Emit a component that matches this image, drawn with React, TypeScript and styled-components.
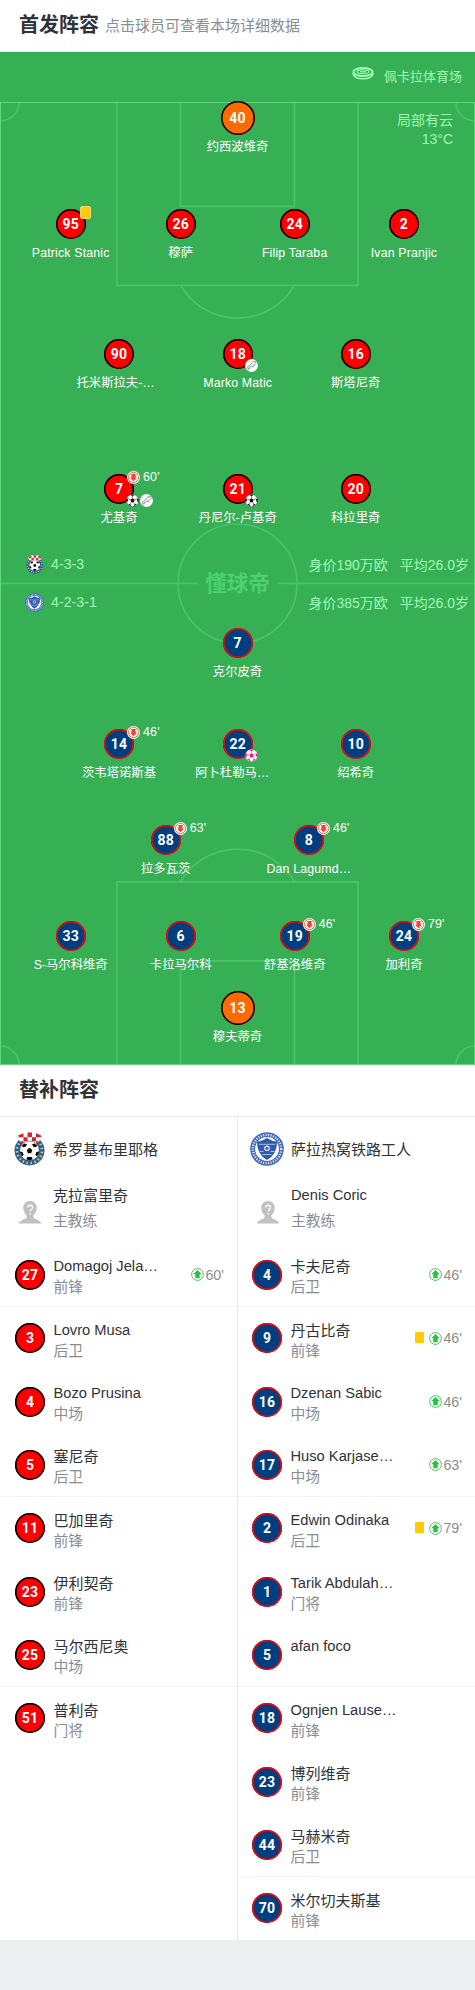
import React from 'react'
import styled, { createGlobalStyle } from 'styled-components'

type Team = 'home' | 'away' | 'keeper'

interface IPlayer {
  no: number,
  name: string,
  clipped?: boolean,
  card?: boolean,
  off?: string,
  events?: string[],
}

interface ISub {
  no: number,
  name: string,
  role?: string,
  card?: boolean,
  on?: string,
}

const COLORS = {
  home: { fill: '#fe0000', ring: '#000' },
  away: { fill: '#003f7f', ring: '#fe0000' },
  keeper: { fill: '#ff6a00', ring: '#000' },
}

// column widths for rows of one to four players
const COLUMNS: { [count: number]: string } = {
  1: '475px',
  2: '143.4px 143.2px',
  3: '118px 119.4px 116.6px',
  4: '109.4px 110.6px 117.4px 101.2px',
}
const INDENT: { [count: number]: number } = { 1: 0, 2: 94, 3: 60, 4: 16 }

const homeRows: IPlayer[][] = [
  [
    { no: 95, name: 'Patrick Stanic', card: true },
    { no: 26, name: '穆萨' },
    { no: 24, name: 'Filip Taraba' },
    { no: 2, name: 'Ivan Pranjic' },
  ],
  [
    { no: 90, name: '托米斯拉夫-…', clipped: true },
    { no: 18, name: 'Marko Matic', events: ['assist'] },
    { no: 16, name: '斯塔尼奇' },
  ],
  [
    { no: 7, name: '尤基奇', off: "60'", events: ['goal', 'assist'] },
    { no: 21, name: '丹尼尔-卢基奇', events: ['goal'] },
    { no: 20, name: '科拉里奇' },
  ],
]

const awayRows: IPlayer[][] = [
  [{ no: 7, name: '克尔皮奇' }],
  [
    { no: 14, name: '茨韦塔诺斯基', off: "46'" },
    { no: 22, name: '阿卜杜勒马…', clipped: true, events: ['penalty'] },
    { no: 10, name: '绍希奇' },
  ],
  [
    { no: 88, name: '拉多瓦茨', off: "63'" },
    { no: 8, name: 'Dan Lagumd…', clipped: true, off: "46'" },
  ],
  [
    { no: 33, name: 'S-马尔科维奇' },
    { no: 6, name: '卡拉马尔科' },
    { no: 19, name: '舒基洛维奇', off: "46'" },
    { no: 24, name: '加利奇', off: "79'" },
  ],
]

const homeSubs: ISub[] = [
  { no: 27, name: 'Domagoj Jela…', role: '前锋', on: "60'" },
  { no: 3, name: 'Lovro Musa', role: '后卫' },
  { no: 4, name: 'Bozo Prusina', role: '中场' },
  { no: 5, name: '塞尼奇', role: '后卫' },
  { no: 11, name: '巴加里奇', role: '前锋' },
  { no: 23, name: '伊利契奇', role: '前锋' },
  { no: 25, name: '马尔西尼奥', role: '中场' },
  { no: 51, name: '普利奇', role: '门将' },
]

const awaySubs: ISub[] = [
  { no: 4, name: '卡夫尼奇', role: '后卫', on: "46'" },
  { no: 9, name: '丹古比奇', role: '前锋', card: true, on: "46'" },
  { no: 16, name: 'Dzenan Sabic', role: '中场', on: "46'" },
  { no: 17, name: 'Huso Karjase…', role: '中场', on: "63'" },
  { no: 2, name: 'Edwin Odinaka', role: '后卫', card: true, on: "79'" },
  { no: 1, name: 'Tarik Abdulah…', role: '门将' },
  { no: 5, name: 'afan foco' },
  { no: 18, name: 'Ognjen Lause…', role: '前锋' },
  { no: 23, name: '博列维奇', role: '前锋' },
  { no: 44, name: '马赫米奇', role: '后卫' },
  { no: 70, name: '米尔切夫斯基', role: '前锋' },
]

const isLatin = (name: string) => /^[A-Za-z ]+…?$/.test(name)

const GlobalStyle = createGlobalStyle`
  body {
    margin: 0;
    background: #edeef0;
    font-family: "Liberation Sans", "Noto Sans CJK SC", sans-serif;
    color: #303337;
  }
`;

const Page = styled.div`
  width: 475px;
  height: 1990px;
  overflow: hidden;
`;

const SectionHeader = styled.div`
  display: flex;
  align-items: center;
  box-sizing: border-box;
  height: 52px;
  padding: 0 19px 2px;
  background: #fff;
  border-bottom: 1px solid #ebebed;
`;

const SectionTitle = styled.h2`
  margin: 0;
  font-size: 20px;
  line-height: 30px;
  font-weight: 700;
`;

const SectionHint = styled.span`
  margin: -1px 0 0 6px;
  font-size: 15px;
  color: #888d94;
`;

const Field = styled.div`
  position: relative;
  height: 1013px;
  background: #37af55;
  color: #fff;
`;

const FieldLines = styled.svg`
  position: absolute;
  left: 0;
  top: 50px;
`;

const FieldContent = styled.div`
  position: relative;
  display: flex;
  flex-direction: column;
`;

const Stadium = styled.div`
  box-sizing: border-box;
  display: flex;
  justify-content: flex-end;
  align-items: center;
  gap: 10px;
  height: 49px;
  padding: 0 13px 2px 0;
  font-size: 13px;
  color: #9cfab3;

  svg {
    margin-top: -4px;
  }
`;

const Weather = styled.div`
  position: absolute;
  right: 22px;
  top: 59px;
  font-size: 14px;
  line-height: 19px;
  text-align: right;
  color: #9cfab3;
`;

const PlayerRow = styled.div<{ $count: number, $gap: number }>`
  display: grid;
  grid-template-columns: ${({ $count }) => COLUMNS[$count]};
  margin-top: ${({ $gap }) => $gap}px;
  padding-left: ${({ $count }) => INDENT[$count]}px;
`;

const PlayerCell = styled.div`
  display: flex;
  flex-direction: column;
  align-items: center;
`;

const ShirtHolder = styled.div`
  position: relative;
`;

const Shirt = styled.div<{ $team: Team }>`
  display: flex;
  align-items: center;
  justify-content: center;
  flex: none;
  width: ${({ $team }) => $team === 'keeper' ? 34 : 30}px;
  height: ${({ $team }) => $team === 'keeper' ? 34 : 30}px;
  border-radius: 50%;
  background: ${({ $team }) => COLORS[$team].fill};
  box-shadow: inset 0 0 0 1.6px ${({ $team }) => COLORS[$team].ring};
  color: #fff;
  font-family: Roboto, sans-serif;
  font-size: 14px;
  font-weight: 700;
  letter-spacing: .2px;
  line-height: 1;
`;

const PlayerName = styled.div<{ $clipped?: boolean, $keeper?: boolean, $latin: boolean }>`
  width: 85px;
  height: 18px;
  margin-top: ${({ $keeper }) => $keeper ? 3 : 5}px;
  font-size: 12.35px;
  line-height: 18px;
  letter-spacing: ${({ $latin }) => $latin ? '.16px' : 'normal'};
  white-space: nowrap;
  text-align: ${({ $clipped }) => $clipped ? 'left' : 'center'};
`;

const YellowCard = styled.i`
  display: block;
  box-sizing: border-box;
  width: 9px;
  height: 11px;
  border-radius: 1px;
  background: #ffcb05;
`;

const CardBadge = styled.div`
  position: absolute;
  left: 24px;
  top: -3px;

  ${YellowCard} {
    width: 11px;
    height: 13px;
    border: 1px solid #f6d56b;
    border-radius: 2px;
  }
`;

const OffBadge = styled.div`
  position: absolute;
  left: 23px;
  top: -3px;
  display: flex;
  align-items: center;
  gap: 3px;
  height: 13px;
  font-size: 12.35px;
  letter-spacing: .2px;

  span {
    margin-top: -2px;
  }
`;

const EventBadges = styled.div`
  position: absolute;
  left: 22px;
  top: 20px;
  display: flex;
  gap: 1px;
`;

const TeamInfo = styled.div<{ $gap: number }>`
  display: flex;
  align-items: center;
  height: 18px;
  margin-top: ${({ $gap }) => $gap}px;
  padding: 0 6px 0 25px;
  font-size: 14px;
  color: #9cfab3;
`;

const Formation = styled.span`
  flex: 1;
  margin-left: 7px;
  font-size: 14.25px;
`;

const Average = styled.span`
  margin-left: 12px;
`;

const Columns = styled.div`
  display: flex;
  height: 823px;
  background: #fff;
`;

const SubsColumn = styled.div`
  box-sizing: border-box;
  width: 237px;
  flex: none;

  & + & {
    width: 238px;
    border-left: 1px solid #e9e9eb;
  }
`;

const ClubRow = styled.div`
  display: flex;
  align-items: center;
  height: 64px;
  padding-left: 12px;
  font-size: 15px;
`;

const ClubName = styled.span`
  margin: -2px 0 0 7px;
`;

const CoachRow = styled.div`
  display: flex;
  height: 62.3px;
  padding-left: 18px;

  svg {
    margin-top: 20px;
  }
`;

const CoachText = styled.div`
  display: flex;
  flex-direction: column;
  margin: 4px 0 0 11px;
`;

const SubRow = styled.div<{ $line: boolean }>`
  box-sizing: border-box;
  display: flex;
  align-items: center;
  height: 63.33px;
  padding: 1px 13px 0 15px;
  border-bottom: ${({ $line }) => $line ? '1px solid #f4f4f5' : '1px solid transparent'};

  ${SubsColumn} + ${SubsColumn} & {
    padding-left: 14px;
  }
`;

const SubText = styled.div`
  flex: 1;
  height: 42px;
  margin: 5px 0 0 8.500px;
`;

const SubName = styled.div<{ $latin: boolean }>`
  font-size: ${({ $latin }) => $latin ? 14.7 : 15}px;
  line-height: 21px;
  white-space: nowrap;
`;

const SubRole = styled.div<{ $coach?: boolean }>`
  margin-top: ${({ $coach }) => $coach ? 5 : 0}px;
  font-size: 14.8px;
  line-height: 21px;
  color: #888d94;
`;

const SubEvents = styled.div`
  display: flex;
  align-items: center;
  gap: 1px;
  font-size: 14.25px;
  color: #8c8c8c;

  ${YellowCard} {
    margin: -2px 4px 0 0;
  }
`;

const StadiumIcon = () => (
  <svg width="22" height="13" viewBox="0 0 22 13" fill="none" stroke="#9cfab3">
    <ellipse cx="11" cy="5" rx="9.600" ry="4.100" strokeWidth="2" />
    <ellipse cx="11" cy="4.800" rx="6" ry="1.900" strokeWidth="1.100" />
    <path d="M8 4.800h6" strokeWidth="1.200" />
    <path d="M.8 6.400c.6 3.300 4 5.400 10.200 5.400s9.600-2.100 10.200-5.400" strokeWidth="1.500" />
  </svg>
)

const ArrowIcon = ({ up }: { up?: boolean }) => (
  <svg width="13" height="13" viewBox="0 0 13 13">
    <circle cx="6.500" cy="6.500" r="6.500" fill="#fff" />
    <circle cx="6.500" cy="6.500" r={up ? 5.9 : 5.1} fill="none" stroke={up ? '#2ac845' : '#f2553a'} strokeWidth=".9" />
    <path
      d={up ? 'M6.500 2 10.800 6.300H8.700V10.200H4.300V6.300H2.200Z' : 'M6.500 10.300 10.100 6.800H8.600V3H4.400V6.800H2.900Z'}
      fill={up ? '#21c63e' : '#f8452a'}
    />
  </svg>
)

const BallIcon = ({ color = '#111', size = 13 }: { color?: string, size?: number }) => (
  <svg width={size} height={size} viewBox="0 0 13 13">
    <circle cx="6.500" cy="6.500" r="6.200" fill="#fff" stroke={color} strokeWidth=".4" />
    <g fill={color}>
      <path d="M6.500 4.300 8.600 5.800 7.800 8.300H5.200L4.400 5.800Z" />
      <path d="M4.300.8h4.400L6.500 2.200ZM.4 5 2.300 4.600 1.700 7.500.4 8ZM12.600 5 10.700 4.600 11.300 7.500 12.600 8ZM2.300 10.200 4.500 10 4.900 12.400ZM10.700 10.200 8.500 10 8.100 12.400Z" />
    </g>
    <path d="M6.500 2v2.300M2.300 4.800l2.200 1M10.700 4.800l-2.200 1M5.200 8.300l-.9 1.800M7.800 8.300l.9 1.800" stroke={color} strokeWidth=".5" />
  </svg>
)

const BootIcon = () => (
  <svg width="13" height="13" viewBox="0 0 13 13">
    <circle cx="6.500" cy="6.500" r="6.400" fill="#fff" />
    <path
      d="M2 8.400 6 5.200 8 2.500 10.600 2.300 11 4.500 8.500 7 6.400 7.400 2.800 9.700ZM3 10.700 5.200 9.300M7.500 8.300 9 7.300"
      fill="#f2f2f2"
      stroke="#777"
      strokeWidth=".7"
    />
  </svg>
)

const HomeCrest = ({ size }: { size: number }) => (
  <svg width={size} height={size} viewBox="0 0 34 34">
    <circle cx="17.500" cy="18.500" r="15" fill="#2b5c9e" />
    <path d="M7 11.500A12.600 12.600 0 1 0 28 11.500" fill="none" stroke="#c9cf62" strokeWidth="2.600" strokeDasharray="1.500 2.500" />
    <path d="M5.500 4 11 1 17.500.5 24 1 29.500 4 27 10 22 13H13L8 10Z" fill="#fff" />
    <path d="M6 3.500l5.500-2.300v4H7ZM15.500.5h4.500V5h-4.500ZM24 1l5.500 2.800-1 1.400H24ZM11.500 5.200h4v4h-4ZM20 5.200h4v4h-4ZM8 9.200h3.500v3.500L8 10ZM15.500 9.200H20v3.500h-4.500ZM24 9.200h3.500L24 12.500Z" fill="#d8202f" />
    <circle cx="17.500" cy="18.800" r="9.800" fill="#fff" stroke="#222" strokeWidth=".4" />
    <g fill="#080808">
      <path d="M17.500 15.800 20.300 17.900 19.200 21.200H15.800L14.700 17.900Z" />
      <path d="M12.300 11.500 15 12.300 13.600 14.800 10.800 15.300 10 13.500ZM22.700 11.500 20 12.300 21.400 14.800 24.200 15.300 25 13.500ZM8 19.500 10.500 20 11.600 22.800 10 24.300 8.500 22ZM27 19.500 24.500 20 23.400 22.800 25 24.300 26.500 22ZM15.200 25h4.600l.9 2.200-3.200 1.300-3.200-1.300Z" />
    </g>
  </svg>
)

const AwayCrest = ({ size }: { size: number }) => (
  <svg width={size} height={size} viewBox="0 0 34 34">
    <circle cx="17" cy="17" r="16.800" fill="#4167b5" />
    <circle cx="17" cy="17" r="14.200" fill="none" stroke="#dbe4f5" strokeWidth="2.400" strokeDasharray="1.200 1.300" />
    <circle cx="17" cy="17" r="11.900" fill="#fff" />
    <path d="M7 9.500Q12 9.300 17 6 22 9.300 27 9.500 27.500 22 17 28 6.500 22 7 9.500Z" fill="#305cae" />
    <path d="M9 12.300h16M9.500 19.500h4M20.500 19.500h4M12.500 22.500h9" stroke="#b5c8ea" strokeWidth=".9" />
    <circle cx="17" cy="16.300" r="2.200" fill="none" stroke="#e6edf9" strokeWidth="1.200" />
  </svg>
)

const AvatarIcon = () => (
  <svg width="24" height="23" viewBox="0 0 24 23">
    <path d="M12 0c4 0 6.700 2.800 6.700 6.800 0 3.500-1.500 6.200-3.300 7.500v2.200c1.500 2 6 2.200 8.100 6H.5c2.100-3.800 6.600-4 8.100-6v-2.200c-1.800-1.300-3.300-4-3.300-7.500C5.300 2.800 8 0 12 0Z" fill="#c1c1c1" />
    <path d="M9.800 6.500c0-3 4.800-3 4.800 0 0 2-2.400 2-2.400 4M12.200 12v1.500" fill="none" stroke="#fff" strokeWidth="1.300" />
  </svg>
)

const EVENT_ICONS: { [key: string]: React.ReactNode } = {
  goal: <BallIcon />,
  assist: <BootIcon />,
  penalty: <BallIcon color="#f0148c" />,
}

const Player: React.FC<{ player: IPlayer, team: Team }> = ({ player, team }) => (
  <PlayerCell>
    <ShirtHolder>
      <Shirt $team={team}>{player.no}</Shirt>
      {player.card && <CardBadge><YellowCard /></CardBadge>}
      {player.off && <OffBadge><ArrowIcon /><span>{player.off}</span></OffBadge>}
      {
        player.events &&
        <EventBadges>
          {player.events.map(event => <React.Fragment key={event}>{EVENT_ICONS[event]}</React.Fragment>)}
        </EventBadges>
      }
    </ShirtHolder>
    <PlayerName $clipped={player.clipped} $keeper={team === 'keeper'} $latin={isLatin(player.name)}>
      {player.name}
    </PlayerName>
  </PlayerCell>
)

const Line: React.FC<{ players: IPlayer[], team: Team, gap: number }> = ({ players, team, gap }) => (
  <PlayerRow $count={players.length} $gap={gap}>
    {players.map(player => <Player key={player.no} player={player} team={team} />)}
  </PlayerRow>
)

const Markings = () => (
  <FieldLines width="475" height="963" viewBox="0 0 475 963" fill="none" stroke="#4bc169" strokeWidth="1.700">
    <path d="M117 0V183.300H358V0M180.500 0V104.300H294.500V0M180.500 183.300A66 66 0 0 0 294.500 183.300" />
    <path d="M117 963V779.800H358V963M180.500 963V858.800H294.500V963M180.500 779.800A66 66 0 0 1 294.500 779.800" />
    <path d="M0 481.300H197.500M277.500 481.300H475" />
    <circle cx="237.500" cy="481.500" r="59.500" />
    <path d="M0 19A19 19 0 0 0 19 0M456 0A19 19 0 0 0 475 19M0 944A19 19 0 0 1 19 963M456 963A19 19 0 0 1 475 944" />
    <rect x=".5" y=".5" width="474" height="962" stroke="#5fd77f" strokeWidth="1" />
    <text x="237.500" y="488.500" textAnchor="middle" fontFamily="Noto Sans CJK SC" fontSize="21.500" fontWeight="700" fill="#4bd26e" stroke="none">懂球帝</text>
  </FieldLines>
)

const Subs: React.FC<{ club: string, crest: React.ReactNode, coach: string, subs: ISub[], team: Team }> = ({ club, crest, coach, subs, team }) => (
  <SubsColumn>
    <ClubRow>{crest}<ClubName>{club}</ClubName></ClubRow>
    <CoachRow>
      <AvatarIcon />
      <CoachText>
        <SubName $latin={isLatin(coach)}>{coach}</SubName>
        <SubRole $coach>主教练</SubRole>
      </CoachText>
    </CoachRow>
    {subs.map((sub, index) => (
      <SubRow key={sub.no} $line={index % 3 === 0}>
        <Shirt $team={team}>{sub.no}</Shirt>
        <SubText>
          <SubName $latin={isLatin(sub.name)}>{sub.name}</SubName>
          <SubRole>{sub.role}</SubRole>
        </SubText>
        <SubEvents>
          {sub.card && <YellowCard />}
          {sub.on && <><ArrowIcon up />{sub.on}</>}
        </SubEvents>
      </SubRow>
    ))}
  </SubsColumn>
)

const HOME_GAPS = [53, 77, 82];
const AWAY_GAPS = [17, 48, 43, 43];

const App: React.FC = () => (
  <Page>
    <GlobalStyle />
    <SectionHeader>
      <SectionTitle>首发阵容</SectionTitle>
      <SectionHint>点击球员可查看本场详细数据</SectionHint>
    </SectionHeader>
    <Field>
      <Markings />
      <FieldContent>
        <Stadium><StadiumIcon />佩卡拉体育场</Stadium>
        <Line players={[{ no: 40, name: '约西波维奇' }]} team="keeper" gap={0} />
        {homeRows.map((row, i) => <Line key={i} players={row} team="home" gap={HOME_GAPS[i]} />)}
        <TeamInfo $gap={28}>
          <HomeCrest size={19} />
          <Formation>4-3-3</Formation>
          <span>身价190万欧</span>
          <Average>平均26.0岁</Average>
        </TeamInfo>
        <TeamInfo $gap={20}>
          <AwayCrest size={19} />
          <Formation>4-2-3-1</Formation>
          <span>身价385万欧</span>
          <Average>平均26.0岁</Average>
        </TeamInfo>
        {awayRows.map((row, i) => <Line key={i} players={row} team="away" gap={AWAY_GAPS[i]} />)}
        <Line players={[{ no: 13, name: '穆夫蒂奇' }]} team="keeper" gap={17} />
      </FieldContent>
      <Weather>局部有云<br />13°C</Weather>
    </Field>
    <SectionHeader>
      <SectionTitle>替补阵容</SectionTitle>
    </SectionHeader>
    <Columns>
      <Subs club="希罗基布里耶格" crest={<HomeCrest size={34} />} coach="克拉富里奇" subs={homeSubs} team="home" />
      <Subs club="萨拉热窝铁路工人" crest={<AwayCrest size={34} />} coach="Denis Coric" subs={awaySubs} team="away" />
    </Columns>
  </Page>
)

export default App;
